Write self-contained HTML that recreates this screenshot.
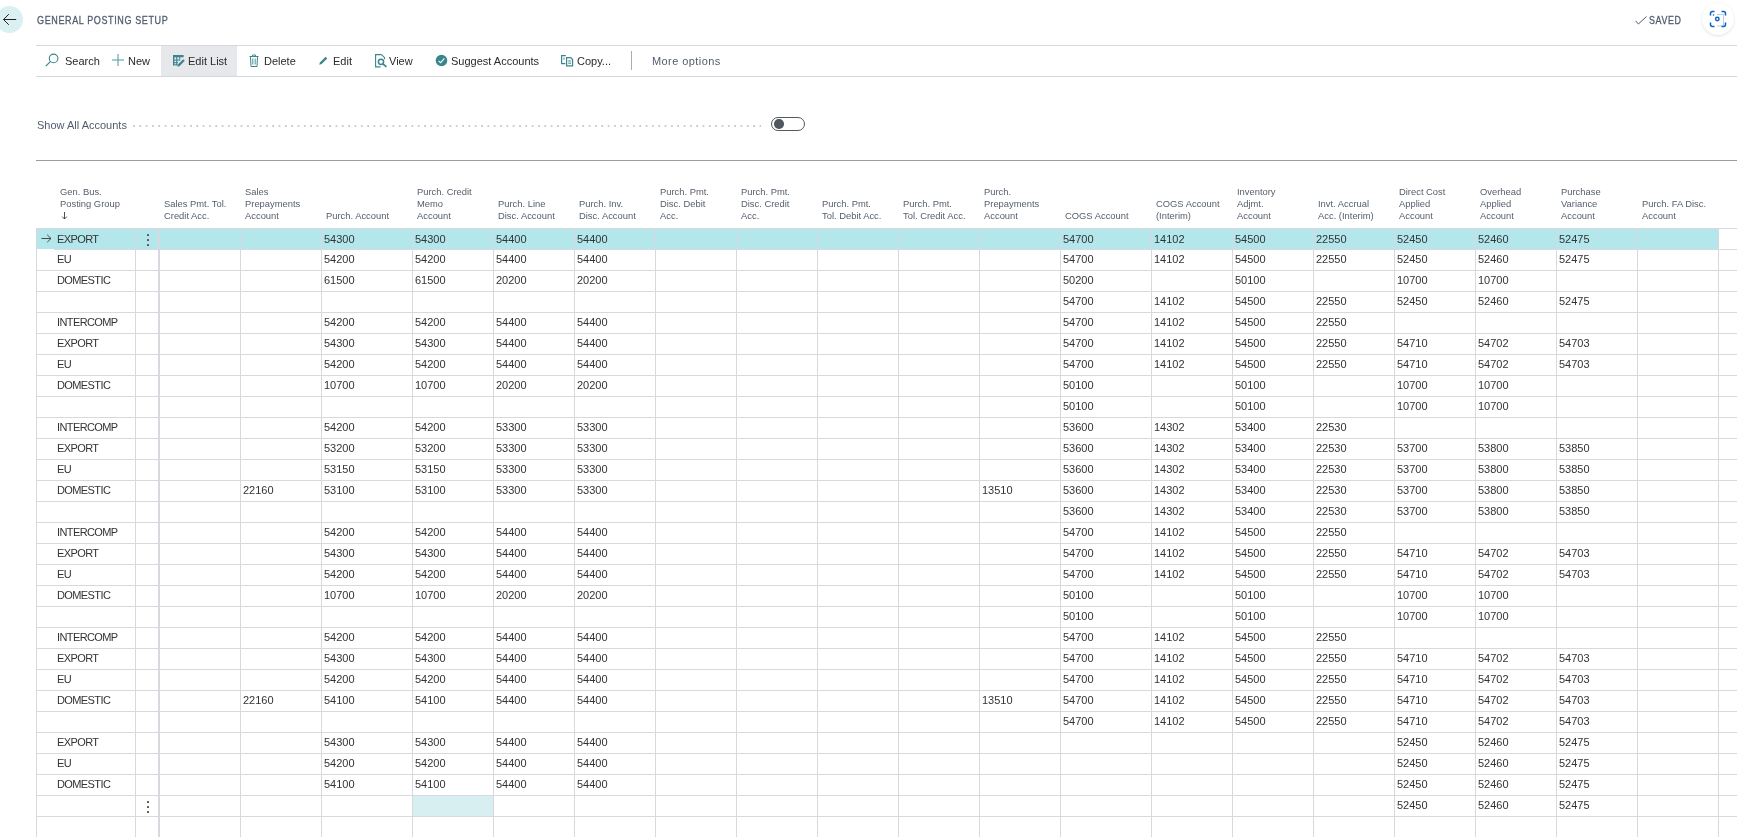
<!DOCTYPE html><html><head><meta charset="utf-8"><style>
*{margin:0;padding:0;box-sizing:border-box}
html,body{width:1737px;height:837px;overflow:hidden;background:#fff}
body{will-change:transform}
body{position:relative;font-family:"Liberation Sans",sans-serif;color:#333333}
.a{position:absolute;white-space:nowrap}
.hl{position:absolute;height:1px;background:#d7d9de}
.vl{position:absolute;width:1px;background:#d7d9de}
.d{position:absolute;white-space:nowrap;font-size:11px;line-height:21px;height:21px}
.h{position:absolute;white-space:nowrap;font-size:9.4px;line-height:12px;color:#56606d}
.tb{position:absolute;white-space:nowrap;font-size:11px;line-height:14px;color:#2a2a2a}

</style></head><body>
<div class="a" style="left:-4px;top:6px;width:27px;height:27px;border-radius:50%;background:#daf0f3"></div>
<svg class="a" style="left:2px;top:12px" width="16" height="15" viewBox="0 0 16 15"><path d="M1.5 7.5H14.2M6.8 2.2L1.5 7.5L6.8 12.8" fill="none" stroke="#222" stroke-width="1"/></svg>
<div class="a" style="left:37px;top:13px;font-size:11px;line-height:14px;color:#505c6d;letter-spacing:0.75px;-webkit-text-stroke:0.3px #505c6d;transform-origin:0 0;transform:scaleX(0.82)">GENERAL POSTING SETUP</div>
<svg class="a" style="left:1635px;top:16px" width="12" height="9" viewBox="0 0 12 9"><path d="M0.5 4.8L3.4 8L11.5 0.5" fill="none" stroke="#505c6d" stroke-width="1"/></svg>
<div class="a" style="left:1649px;top:13px;font-size:11px;line-height:14px;color:#505c6d;letter-spacing:0.75px;-webkit-text-stroke:0.3px #505c6d;transform-origin:0 0;transform:scaleX(0.81)">SAVED</div>
<div class="a" style="left:1702px;top:3px;width:32px;height:32px;border-radius:50%;background:#fff;box-shadow:0 1px 3px rgba(0,0,0,0.12)"></div>
<svg class="a" style="left:1709px;top:10px" width="18" height="18" viewBox="0 0 18 18"><path d="M8 4.5H14.5V16H8" fill="none" stroke="#a9d3d5" stroke-width="0.9"/><g fill="none" stroke="#0f62c4" stroke-width="1.5"><path d="M1.5 5.5V3.5Q1.5 1.5 3.5 1.5H5.5M12.5 1.5H14.5Q16.5 1.5 16.5 3.5V5.5M16.5 12.5V14.5Q16.5 16.5 14.5 16.5H12.5M5.5 16.5H3.5Q1.5 16.5 1.5 14.5V12.5"/><circle cx="8.3" cy="9" r="1.7"/></g><circle cx="4.5" cy="5" r="0.8" fill="#0f62c4"/></svg>
<div class="hl" style="left:36px;top:45px;width:1701px;background:#d5d8dd"></div>
<div class="hl" style="left:36px;top:76px;width:1701px;background:#d5d8dd"></div>
<div class="a" style="left:161px;top:46px;width:76px;height:30px;background:#e6e8eb"></div>
<svg class="a" style="left:45px;top:53px" width="14" height="14" viewBox="0 0 14 14"><circle cx="8.6" cy="5.4" r="4.3" fill="none" stroke="#3a858e" stroke-width="1.1"/><path d="M5.6 8.4L0.8 13.2" stroke="#3a858e" stroke-width="1.2"/></svg>
<div class="tb" style="left:65px;top:54px">Search</div>
<svg class="a" style="left:112px;top:54px" width="12" height="12" viewBox="0 0 12 12"><path d="M6 0V12M0 6H12" stroke="#4f9aa2" stroke-width="1"/></svg>
<div class="tb" style="left:128px;top:54px">New</div>
<svg class="a" style="left:172px;top:54px" width="14" height="14" viewBox="0 0 14 14"><g fill="#3a858e"><rect x="1" y="1" width="10.6" height="2.3"/><rect x="1" y="1" width="1.4" height="10.3"/><rect x="4.2" y="3" width="1.1" height="8.3"/><rect x="1" y="5.6" width="6.6" height="1"/><rect x="1" y="8.2" width="5" height="1"/><rect x="1" y="10.3" width="4.3" height="1"/><rect x="7.2" y="3" width="1" height="3.4"/></g><path d="M5.2 12.6L5.8 10.6L11.2 5.2L12.8 6.8L7.4 12.2Z" fill="#3a858e"/></svg>
<div class="tb" style="left:188px;top:54px">Edit List</div>
<svg class="a" style="left:249px;top:54px" width="10" height="13" viewBox="0 0 10 13"><g fill="none" stroke="#3a858e" stroke-width="1"><path d="M0.5 2.5H9.5M3.5 2.5V1H6.5V2.5M1.5 2.5L2 12.5H8L8.5 2.5"/><path d="M3.8 4.5V10.5M6.2 4.5V10.5" stroke-width="0.9"/></g></svg>
<div class="tb" style="left:264px;top:54px">Delete</div>
<svg class="a" style="left:319px;top:56px" width="9" height="9" viewBox="0 0 9 9"><path d="M0.3 8.7L0.9 6.4L6.6 0.7L8.3 2.4L2.6 8.1Z" fill="#3a858e"/></svg>
<div class="tb" style="left:333px;top:54px">Edit</div>
<svg class="a" style="left:375px;top:54px" width="13" height="14" viewBox="0 0 13 14"><g fill="none" stroke="#3a858e"><path d="M6.5 0.6H0.6V12.9H5.5M6.5 0.6L9.6 3.7V5.2" stroke-width="1.1"/><circle cx="6" cy="7.8" r="2.6" stroke-width="1.5"/><path d="M7.9 9.8L11.4 12.9" stroke-width="1.7"/></g></svg>
<div class="tb" style="left:389px;top:54px">View</div>
<svg class="a" style="left:435px;top:54px" width="13" height="13" viewBox="0 0 13 13"><circle cx="6.5" cy="6.5" r="5.8" fill="#3a858e"/><path d="M3.6 6.8L5.6 8.6L9.4 4.4" fill="none" stroke="#fff" stroke-width="1.1"/></svg>
<div class="tb" style="left:451px;top:54px">Suggest Accounts</div>
<svg class="a" style="left:561px;top:55px" width="13" height="12" viewBox="0 0 13 12"><g fill="none" stroke="#3a858e" stroke-width="1.2"><path d="M4.8 0.6H0.6V8.6H4.4"/><path d="M5.6 2.6H9.6L11.6 4.6V10.9H5.6Z"/><path d="M7.2 6H10.2M7.2 8.2H10.2M3 2.6V4.6" stroke-width="1"/></g></svg>
<div class="tb" style="left:577px;top:54px">Copy...</div>
<div class="a" style="left:631px;top:51px;width:1px;height:19px;background:#a9adb3"></div>
<div class="tb" style="left:652px;top:54px;color:#505c6d;letter-spacing:0.42px">More options</div>
<div class="tb" style="left:37px;top:118px;color:#505c6d">Show All Accounts</div>
<div class="a" style="left:133px;top:125px;width:628px;height:2px;background-image:radial-gradient(circle at 1px 1px,#c4c8cd 0.7px,transparent 0.9px);background-size:6.33px 2px"></div>
<div class="a" style="left:771px;top:117px;width:34px;height:14px;border:1.4px solid #525860;border-radius:7px"></div>
<div class="a" style="left:774px;top:119px;width:9.5px;height:9.5px;border-radius:50%;background:#525860"></div>
<div class="hl" style="left:36px;top:160px;width:1701px;background:#9c9c9c"></div>
<div class="h" style="left:60px;top:186px">Gen. Bus.<br>Posting Group<br>&nbsp;</div>
<div class="h" style="left:164px;top:198px">Sales Pmt. Tol.<br>Credit Acc.</div>
<div class="h" style="left:245px;top:186px">Sales<br>Prepayments<br>Account</div>
<div class="h" style="left:326px;top:210px">Purch. Account</div>
<div class="h" style="left:417px;top:186px">Purch. Credit<br>Memo<br>Account</div>
<div class="h" style="left:498px;top:198px">Purch. Line<br>Disc. Account</div>
<div class="h" style="left:579px;top:198px">Purch. Inv.<br>Disc. Account</div>
<div class="h" style="left:660px;top:186px">Purch. Pmt.<br>Disc. Debit<br>Acc.</div>
<div class="h" style="left:741px;top:186px">Purch. Pmt.<br>Disc. Credit<br>Acc.</div>
<div class="h" style="left:822px;top:198px">Purch. Pmt.<br>Tol. Debit Acc.</div>
<div class="h" style="left:903px;top:198px">Purch. Pmt.<br>Tol. Credit Acc.</div>
<div class="h" style="left:984px;top:186px">Purch.<br>Prepayments<br>Account</div>
<div class="h" style="left:1065px;top:210px">COGS Account</div>
<div class="h" style="left:1156px;top:198px">COGS Account<br>(Interim)</div>
<div class="h" style="left:1237px;top:186px">Inventory<br>Adjmt.<br>Account</div>
<div class="h" style="left:1318px;top:198px">Invt. Accrual<br>Acc. (Interim)</div>
<div class="h" style="left:1399px;top:186px">Direct Cost<br>Applied<br>Account</div>
<div class="h" style="left:1480px;top:186px">Overhead<br>Applied<br>Account</div>
<div class="h" style="left:1561px;top:186px">Purchase<br>Variance<br>Account</div>
<div class="h" style="left:1642px;top:198px">Purch. FA Disc.<br>Account</div>
<svg class="a" style="left:61px;top:211px" width="7" height="9" viewBox="0 0 7 9"><path d="M3.5 1V8M1.2 5.6L3.5 8L5.8 5.6" fill="none" stroke="#3c3c3c" stroke-width="0.9"/></svg>
<div class="a" style="left:36px;top:228px;width:1682px;height:22px;background:#b3e7eb"></div>
<div class="a" style="left:412px;top:795px;width:81px;height:22px;background:#d8eff2"></div>
<div class="hl" style="left:36px;top:228px;width:1701px"></div>
<div class="hl" style="left:36px;top:249px;width:1701px"></div>
<div class="hl" style="left:36px;top:270px;width:1701px"></div>
<div class="hl" style="left:36px;top:291px;width:1701px"></div>
<div class="hl" style="left:36px;top:312px;width:1701px"></div>
<div class="hl" style="left:36px;top:333px;width:1701px"></div>
<div class="hl" style="left:36px;top:354px;width:1701px"></div>
<div class="hl" style="left:36px;top:375px;width:1701px"></div>
<div class="hl" style="left:36px;top:396px;width:1701px"></div>
<div class="hl" style="left:36px;top:417px;width:1701px"></div>
<div class="hl" style="left:36px;top:438px;width:1701px"></div>
<div class="hl" style="left:36px;top:459px;width:1701px"></div>
<div class="hl" style="left:36px;top:480px;width:1701px"></div>
<div class="hl" style="left:36px;top:501px;width:1701px"></div>
<div class="hl" style="left:36px;top:522px;width:1701px"></div>
<div class="hl" style="left:36px;top:543px;width:1701px"></div>
<div class="hl" style="left:36px;top:564px;width:1701px"></div>
<div class="hl" style="left:36px;top:585px;width:1701px"></div>
<div class="hl" style="left:36px;top:606px;width:1701px"></div>
<div class="hl" style="left:36px;top:627px;width:1701px"></div>
<div class="hl" style="left:36px;top:648px;width:1701px"></div>
<div class="hl" style="left:36px;top:669px;width:1701px"></div>
<div class="hl" style="left:36px;top:690px;width:1701px"></div>
<div class="hl" style="left:36px;top:711px;width:1701px"></div>
<div class="hl" style="left:36px;top:732px;width:1701px"></div>
<div class="hl" style="left:36px;top:753px;width:1701px"></div>
<div class="hl" style="left:36px;top:774px;width:1701px"></div>
<div class="hl" style="left:36px;top:795px;width:1701px"></div>
<div class="hl" style="left:36px;top:816px;width:1701px"></div>
<div class="vl" style="left:36px;top:228px;height:609px;width:1px"></div>
<div class="vl" style="left:135px;top:228px;height:609px;width:1px"></div>
<div class="vl" style="left:158px;top:228px;height:609px;width:2px"></div>
<div class="vl" style="left:240px;top:228px;height:609px;width:1px"></div>
<div class="vl" style="left:321px;top:228px;height:609px;width:1px"></div>
<div class="vl" style="left:412px;top:228px;height:609px;width:1px"></div>
<div class="vl" style="left:493px;top:228px;height:609px;width:1px"></div>
<div class="vl" style="left:574px;top:228px;height:609px;width:1px"></div>
<div class="vl" style="left:655px;top:228px;height:609px;width:1px"></div>
<div class="vl" style="left:736px;top:228px;height:609px;width:1px"></div>
<div class="vl" style="left:817px;top:228px;height:609px;width:1px"></div>
<div class="vl" style="left:898px;top:228px;height:609px;width:1px"></div>
<div class="vl" style="left:979px;top:228px;height:609px;width:1px"></div>
<div class="vl" style="left:1060px;top:228px;height:609px;width:1px"></div>
<div class="vl" style="left:1151px;top:228px;height:609px;width:1px"></div>
<div class="vl" style="left:1232px;top:228px;height:609px;width:1px"></div>
<div class="vl" style="left:1313px;top:228px;height:609px;width:1px"></div>
<div class="vl" style="left:1394px;top:228px;height:609px;width:1px"></div>
<div class="vl" style="left:1475px;top:228px;height:609px;width:1px"></div>
<div class="vl" style="left:1556px;top:228px;height:609px;width:1px"></div>
<div class="vl" style="left:1637px;top:228px;height:609px;width:1px"></div>
<div class="vl" style="left:1718px;top:228px;height:609px;width:1px"></div>
<div class="a" style="left:37px;top:249px;width:17px;height:1px;background:#fff"></div>
<svg class="a" style="left:41px;top:234px" width="11" height="10" viewBox="0 0 11 10"><path d="M0.5 4.5H10M6.2 0.8L10 4.5L6.2 8.2" fill="none" stroke="#3a3a3a" stroke-width="0.9"/></svg>
<div class="a" style="left:147px;top:234px;width:2px;height:2px;background:#555;border-radius:0.6px"></div>
<div class="a" style="left:147px;top:239px;width:2px;height:2px;background:#555;border-radius:0.6px"></div>
<div class="a" style="left:147px;top:244px;width:2px;height:2px;background:#555;border-radius:0.6px"></div>
<div class="a" style="left:147px;top:801px;width:2px;height:2px;background:#555;border-radius:0.6px"></div>
<div class="a" style="left:147px;top:806px;width:2px;height:2px;background:#555;border-radius:0.6px"></div>
<div class="a" style="left:147px;top:811px;width:2px;height:2px;background:#555;border-radius:0.6px"></div>
<div class="d" style="left:57px;top:229px;letter-spacing:-0.6px">EXPORT</div>
<div class="d" style="left:324px;top:229px">54300</div>
<div class="d" style="left:415px;top:229px">54300</div>
<div class="d" style="left:496px;top:229px">54400</div>
<div class="d" style="left:577px;top:229px">54400</div>
<div class="d" style="left:1063px;top:229px">54700</div>
<div class="d" style="left:1154px;top:229px">14102</div>
<div class="d" style="left:1235px;top:229px">54500</div>
<div class="d" style="left:1316px;top:229px">22550</div>
<div class="d" style="left:1397px;top:229px">52450</div>
<div class="d" style="left:1478px;top:229px">52460</div>
<div class="d" style="left:1559px;top:229px">52475</div>
<div class="d" style="left:57px;top:249px;letter-spacing:-0.6px">EU</div>
<div class="d" style="left:324px;top:249px">54200</div>
<div class="d" style="left:415px;top:249px">54200</div>
<div class="d" style="left:496px;top:249px">54400</div>
<div class="d" style="left:577px;top:249px">54400</div>
<div class="d" style="left:1063px;top:249px">54700</div>
<div class="d" style="left:1154px;top:249px">14102</div>
<div class="d" style="left:1235px;top:249px">54500</div>
<div class="d" style="left:1316px;top:249px">22550</div>
<div class="d" style="left:1397px;top:249px">52450</div>
<div class="d" style="left:1478px;top:249px">52460</div>
<div class="d" style="left:1559px;top:249px">52475</div>
<div class="d" style="left:57px;top:270px;letter-spacing:-0.6px">DOMESTIC</div>
<div class="d" style="left:324px;top:270px">61500</div>
<div class="d" style="left:415px;top:270px">61500</div>
<div class="d" style="left:496px;top:270px">20200</div>
<div class="d" style="left:577px;top:270px">20200</div>
<div class="d" style="left:1063px;top:270px">50200</div>
<div class="d" style="left:1235px;top:270px">50100</div>
<div class="d" style="left:1397px;top:270px">10700</div>
<div class="d" style="left:1478px;top:270px">10700</div>
<div class="d" style="left:1063px;top:291px">54700</div>
<div class="d" style="left:1154px;top:291px">14102</div>
<div class="d" style="left:1235px;top:291px">54500</div>
<div class="d" style="left:1316px;top:291px">22550</div>
<div class="d" style="left:1397px;top:291px">52450</div>
<div class="d" style="left:1478px;top:291px">52460</div>
<div class="d" style="left:1559px;top:291px">52475</div>
<div class="d" style="left:57px;top:312px;letter-spacing:-0.6px">INTERCOMP</div>
<div class="d" style="left:324px;top:312px">54200</div>
<div class="d" style="left:415px;top:312px">54200</div>
<div class="d" style="left:496px;top:312px">54400</div>
<div class="d" style="left:577px;top:312px">54400</div>
<div class="d" style="left:1063px;top:312px">54700</div>
<div class="d" style="left:1154px;top:312px">14102</div>
<div class="d" style="left:1235px;top:312px">54500</div>
<div class="d" style="left:1316px;top:312px">22550</div>
<div class="d" style="left:57px;top:333px;letter-spacing:-0.6px">EXPORT</div>
<div class="d" style="left:324px;top:333px">54300</div>
<div class="d" style="left:415px;top:333px">54300</div>
<div class="d" style="left:496px;top:333px">54400</div>
<div class="d" style="left:577px;top:333px">54400</div>
<div class="d" style="left:1063px;top:333px">54700</div>
<div class="d" style="left:1154px;top:333px">14102</div>
<div class="d" style="left:1235px;top:333px">54500</div>
<div class="d" style="left:1316px;top:333px">22550</div>
<div class="d" style="left:1397px;top:333px">54710</div>
<div class="d" style="left:1478px;top:333px">54702</div>
<div class="d" style="left:1559px;top:333px">54703</div>
<div class="d" style="left:57px;top:354px;letter-spacing:-0.6px">EU</div>
<div class="d" style="left:324px;top:354px">54200</div>
<div class="d" style="left:415px;top:354px">54200</div>
<div class="d" style="left:496px;top:354px">54400</div>
<div class="d" style="left:577px;top:354px">54400</div>
<div class="d" style="left:1063px;top:354px">54700</div>
<div class="d" style="left:1154px;top:354px">14102</div>
<div class="d" style="left:1235px;top:354px">54500</div>
<div class="d" style="left:1316px;top:354px">22550</div>
<div class="d" style="left:1397px;top:354px">54710</div>
<div class="d" style="left:1478px;top:354px">54702</div>
<div class="d" style="left:1559px;top:354px">54703</div>
<div class="d" style="left:57px;top:375px;letter-spacing:-0.6px">DOMESTIC</div>
<div class="d" style="left:324px;top:375px">10700</div>
<div class="d" style="left:415px;top:375px">10700</div>
<div class="d" style="left:496px;top:375px">20200</div>
<div class="d" style="left:577px;top:375px">20200</div>
<div class="d" style="left:1063px;top:375px">50100</div>
<div class="d" style="left:1235px;top:375px">50100</div>
<div class="d" style="left:1397px;top:375px">10700</div>
<div class="d" style="left:1478px;top:375px">10700</div>
<div class="d" style="left:1063px;top:396px">50100</div>
<div class="d" style="left:1235px;top:396px">50100</div>
<div class="d" style="left:1397px;top:396px">10700</div>
<div class="d" style="left:1478px;top:396px">10700</div>
<div class="d" style="left:57px;top:417px;letter-spacing:-0.6px">INTERCOMP</div>
<div class="d" style="left:324px;top:417px">54200</div>
<div class="d" style="left:415px;top:417px">54200</div>
<div class="d" style="left:496px;top:417px">53300</div>
<div class="d" style="left:577px;top:417px">53300</div>
<div class="d" style="left:1063px;top:417px">53600</div>
<div class="d" style="left:1154px;top:417px">14302</div>
<div class="d" style="left:1235px;top:417px">53400</div>
<div class="d" style="left:1316px;top:417px">22530</div>
<div class="d" style="left:57px;top:438px;letter-spacing:-0.6px">EXPORT</div>
<div class="d" style="left:324px;top:438px">53200</div>
<div class="d" style="left:415px;top:438px">53200</div>
<div class="d" style="left:496px;top:438px">53300</div>
<div class="d" style="left:577px;top:438px">53300</div>
<div class="d" style="left:1063px;top:438px">53600</div>
<div class="d" style="left:1154px;top:438px">14302</div>
<div class="d" style="left:1235px;top:438px">53400</div>
<div class="d" style="left:1316px;top:438px">22530</div>
<div class="d" style="left:1397px;top:438px">53700</div>
<div class="d" style="left:1478px;top:438px">53800</div>
<div class="d" style="left:1559px;top:438px">53850</div>
<div class="d" style="left:57px;top:459px;letter-spacing:-0.6px">EU</div>
<div class="d" style="left:324px;top:459px">53150</div>
<div class="d" style="left:415px;top:459px">53150</div>
<div class="d" style="left:496px;top:459px">53300</div>
<div class="d" style="left:577px;top:459px">53300</div>
<div class="d" style="left:1063px;top:459px">53600</div>
<div class="d" style="left:1154px;top:459px">14302</div>
<div class="d" style="left:1235px;top:459px">53400</div>
<div class="d" style="left:1316px;top:459px">22530</div>
<div class="d" style="left:1397px;top:459px">53700</div>
<div class="d" style="left:1478px;top:459px">53800</div>
<div class="d" style="left:1559px;top:459px">53850</div>
<div class="d" style="left:57px;top:480px;letter-spacing:-0.6px">DOMESTIC</div>
<div class="d" style="left:243px;top:480px">22160</div>
<div class="d" style="left:324px;top:480px">53100</div>
<div class="d" style="left:415px;top:480px">53100</div>
<div class="d" style="left:496px;top:480px">53300</div>
<div class="d" style="left:577px;top:480px">53300</div>
<div class="d" style="left:982px;top:480px">13510</div>
<div class="d" style="left:1063px;top:480px">53600</div>
<div class="d" style="left:1154px;top:480px">14302</div>
<div class="d" style="left:1235px;top:480px">53400</div>
<div class="d" style="left:1316px;top:480px">22530</div>
<div class="d" style="left:1397px;top:480px">53700</div>
<div class="d" style="left:1478px;top:480px">53800</div>
<div class="d" style="left:1559px;top:480px">53850</div>
<div class="d" style="left:1063px;top:501px">53600</div>
<div class="d" style="left:1154px;top:501px">14302</div>
<div class="d" style="left:1235px;top:501px">53400</div>
<div class="d" style="left:1316px;top:501px">22530</div>
<div class="d" style="left:1397px;top:501px">53700</div>
<div class="d" style="left:1478px;top:501px">53800</div>
<div class="d" style="left:1559px;top:501px">53850</div>
<div class="d" style="left:57px;top:522px;letter-spacing:-0.6px">INTERCOMP</div>
<div class="d" style="left:324px;top:522px">54200</div>
<div class="d" style="left:415px;top:522px">54200</div>
<div class="d" style="left:496px;top:522px">54400</div>
<div class="d" style="left:577px;top:522px">54400</div>
<div class="d" style="left:1063px;top:522px">54700</div>
<div class="d" style="left:1154px;top:522px">14102</div>
<div class="d" style="left:1235px;top:522px">54500</div>
<div class="d" style="left:1316px;top:522px">22550</div>
<div class="d" style="left:57px;top:543px;letter-spacing:-0.6px">EXPORT</div>
<div class="d" style="left:324px;top:543px">54300</div>
<div class="d" style="left:415px;top:543px">54300</div>
<div class="d" style="left:496px;top:543px">54400</div>
<div class="d" style="left:577px;top:543px">54400</div>
<div class="d" style="left:1063px;top:543px">54700</div>
<div class="d" style="left:1154px;top:543px">14102</div>
<div class="d" style="left:1235px;top:543px">54500</div>
<div class="d" style="left:1316px;top:543px">22550</div>
<div class="d" style="left:1397px;top:543px">54710</div>
<div class="d" style="left:1478px;top:543px">54702</div>
<div class="d" style="left:1559px;top:543px">54703</div>
<div class="d" style="left:57px;top:564px;letter-spacing:-0.6px">EU</div>
<div class="d" style="left:324px;top:564px">54200</div>
<div class="d" style="left:415px;top:564px">54200</div>
<div class="d" style="left:496px;top:564px">54400</div>
<div class="d" style="left:577px;top:564px">54400</div>
<div class="d" style="left:1063px;top:564px">54700</div>
<div class="d" style="left:1154px;top:564px">14102</div>
<div class="d" style="left:1235px;top:564px">54500</div>
<div class="d" style="left:1316px;top:564px">22550</div>
<div class="d" style="left:1397px;top:564px">54710</div>
<div class="d" style="left:1478px;top:564px">54702</div>
<div class="d" style="left:1559px;top:564px">54703</div>
<div class="d" style="left:57px;top:585px;letter-spacing:-0.6px">DOMESTIC</div>
<div class="d" style="left:324px;top:585px">10700</div>
<div class="d" style="left:415px;top:585px">10700</div>
<div class="d" style="left:496px;top:585px">20200</div>
<div class="d" style="left:577px;top:585px">20200</div>
<div class="d" style="left:1063px;top:585px">50100</div>
<div class="d" style="left:1235px;top:585px">50100</div>
<div class="d" style="left:1397px;top:585px">10700</div>
<div class="d" style="left:1478px;top:585px">10700</div>
<div class="d" style="left:1063px;top:606px">50100</div>
<div class="d" style="left:1235px;top:606px">50100</div>
<div class="d" style="left:1397px;top:606px">10700</div>
<div class="d" style="left:1478px;top:606px">10700</div>
<div class="d" style="left:57px;top:627px;letter-spacing:-0.6px">INTERCOMP</div>
<div class="d" style="left:324px;top:627px">54200</div>
<div class="d" style="left:415px;top:627px">54200</div>
<div class="d" style="left:496px;top:627px">54400</div>
<div class="d" style="left:577px;top:627px">54400</div>
<div class="d" style="left:1063px;top:627px">54700</div>
<div class="d" style="left:1154px;top:627px">14102</div>
<div class="d" style="left:1235px;top:627px">54500</div>
<div class="d" style="left:1316px;top:627px">22550</div>
<div class="d" style="left:57px;top:648px;letter-spacing:-0.6px">EXPORT</div>
<div class="d" style="left:324px;top:648px">54300</div>
<div class="d" style="left:415px;top:648px">54300</div>
<div class="d" style="left:496px;top:648px">54400</div>
<div class="d" style="left:577px;top:648px">54400</div>
<div class="d" style="left:1063px;top:648px">54700</div>
<div class="d" style="left:1154px;top:648px">14102</div>
<div class="d" style="left:1235px;top:648px">54500</div>
<div class="d" style="left:1316px;top:648px">22550</div>
<div class="d" style="left:1397px;top:648px">54710</div>
<div class="d" style="left:1478px;top:648px">54702</div>
<div class="d" style="left:1559px;top:648px">54703</div>
<div class="d" style="left:57px;top:669px;letter-spacing:-0.6px">EU</div>
<div class="d" style="left:324px;top:669px">54200</div>
<div class="d" style="left:415px;top:669px">54200</div>
<div class="d" style="left:496px;top:669px">54400</div>
<div class="d" style="left:577px;top:669px">54400</div>
<div class="d" style="left:1063px;top:669px">54700</div>
<div class="d" style="left:1154px;top:669px">14102</div>
<div class="d" style="left:1235px;top:669px">54500</div>
<div class="d" style="left:1316px;top:669px">22550</div>
<div class="d" style="left:1397px;top:669px">54710</div>
<div class="d" style="left:1478px;top:669px">54702</div>
<div class="d" style="left:1559px;top:669px">54703</div>
<div class="d" style="left:57px;top:690px;letter-spacing:-0.6px">DOMESTIC</div>
<div class="d" style="left:243px;top:690px">22160</div>
<div class="d" style="left:324px;top:690px">54100</div>
<div class="d" style="left:415px;top:690px">54100</div>
<div class="d" style="left:496px;top:690px">54400</div>
<div class="d" style="left:577px;top:690px">54400</div>
<div class="d" style="left:982px;top:690px">13510</div>
<div class="d" style="left:1063px;top:690px">54700</div>
<div class="d" style="left:1154px;top:690px">14102</div>
<div class="d" style="left:1235px;top:690px">54500</div>
<div class="d" style="left:1316px;top:690px">22550</div>
<div class="d" style="left:1397px;top:690px">54710</div>
<div class="d" style="left:1478px;top:690px">54702</div>
<div class="d" style="left:1559px;top:690px">54703</div>
<div class="d" style="left:1063px;top:711px">54700</div>
<div class="d" style="left:1154px;top:711px">14102</div>
<div class="d" style="left:1235px;top:711px">54500</div>
<div class="d" style="left:1316px;top:711px">22550</div>
<div class="d" style="left:1397px;top:711px">54710</div>
<div class="d" style="left:1478px;top:711px">54702</div>
<div class="d" style="left:1559px;top:711px">54703</div>
<div class="d" style="left:57px;top:732px;letter-spacing:-0.6px">EXPORT</div>
<div class="d" style="left:324px;top:732px">54300</div>
<div class="d" style="left:415px;top:732px">54300</div>
<div class="d" style="left:496px;top:732px">54400</div>
<div class="d" style="left:577px;top:732px">54400</div>
<div class="d" style="left:1397px;top:732px">52450</div>
<div class="d" style="left:1478px;top:732px">52460</div>
<div class="d" style="left:1559px;top:732px">52475</div>
<div class="d" style="left:57px;top:753px;letter-spacing:-0.6px">EU</div>
<div class="d" style="left:324px;top:753px">54200</div>
<div class="d" style="left:415px;top:753px">54200</div>
<div class="d" style="left:496px;top:753px">54400</div>
<div class="d" style="left:577px;top:753px">54400</div>
<div class="d" style="left:1397px;top:753px">52450</div>
<div class="d" style="left:1478px;top:753px">52460</div>
<div class="d" style="left:1559px;top:753px">52475</div>
<div class="d" style="left:57px;top:774px;letter-spacing:-0.6px">DOMESTIC</div>
<div class="d" style="left:324px;top:774px">54100</div>
<div class="d" style="left:415px;top:774px">54100</div>
<div class="d" style="left:496px;top:774px">54400</div>
<div class="d" style="left:577px;top:774px">54400</div>
<div class="d" style="left:1397px;top:774px">52450</div>
<div class="d" style="left:1478px;top:774px">52460</div>
<div class="d" style="left:1559px;top:774px">52475</div>
<div class="d" style="left:1397px;top:795px">52450</div>
<div class="d" style="left:1478px;top:795px">52460</div>
<div class="d" style="left:1559px;top:795px">52475</div>
</body></html>
